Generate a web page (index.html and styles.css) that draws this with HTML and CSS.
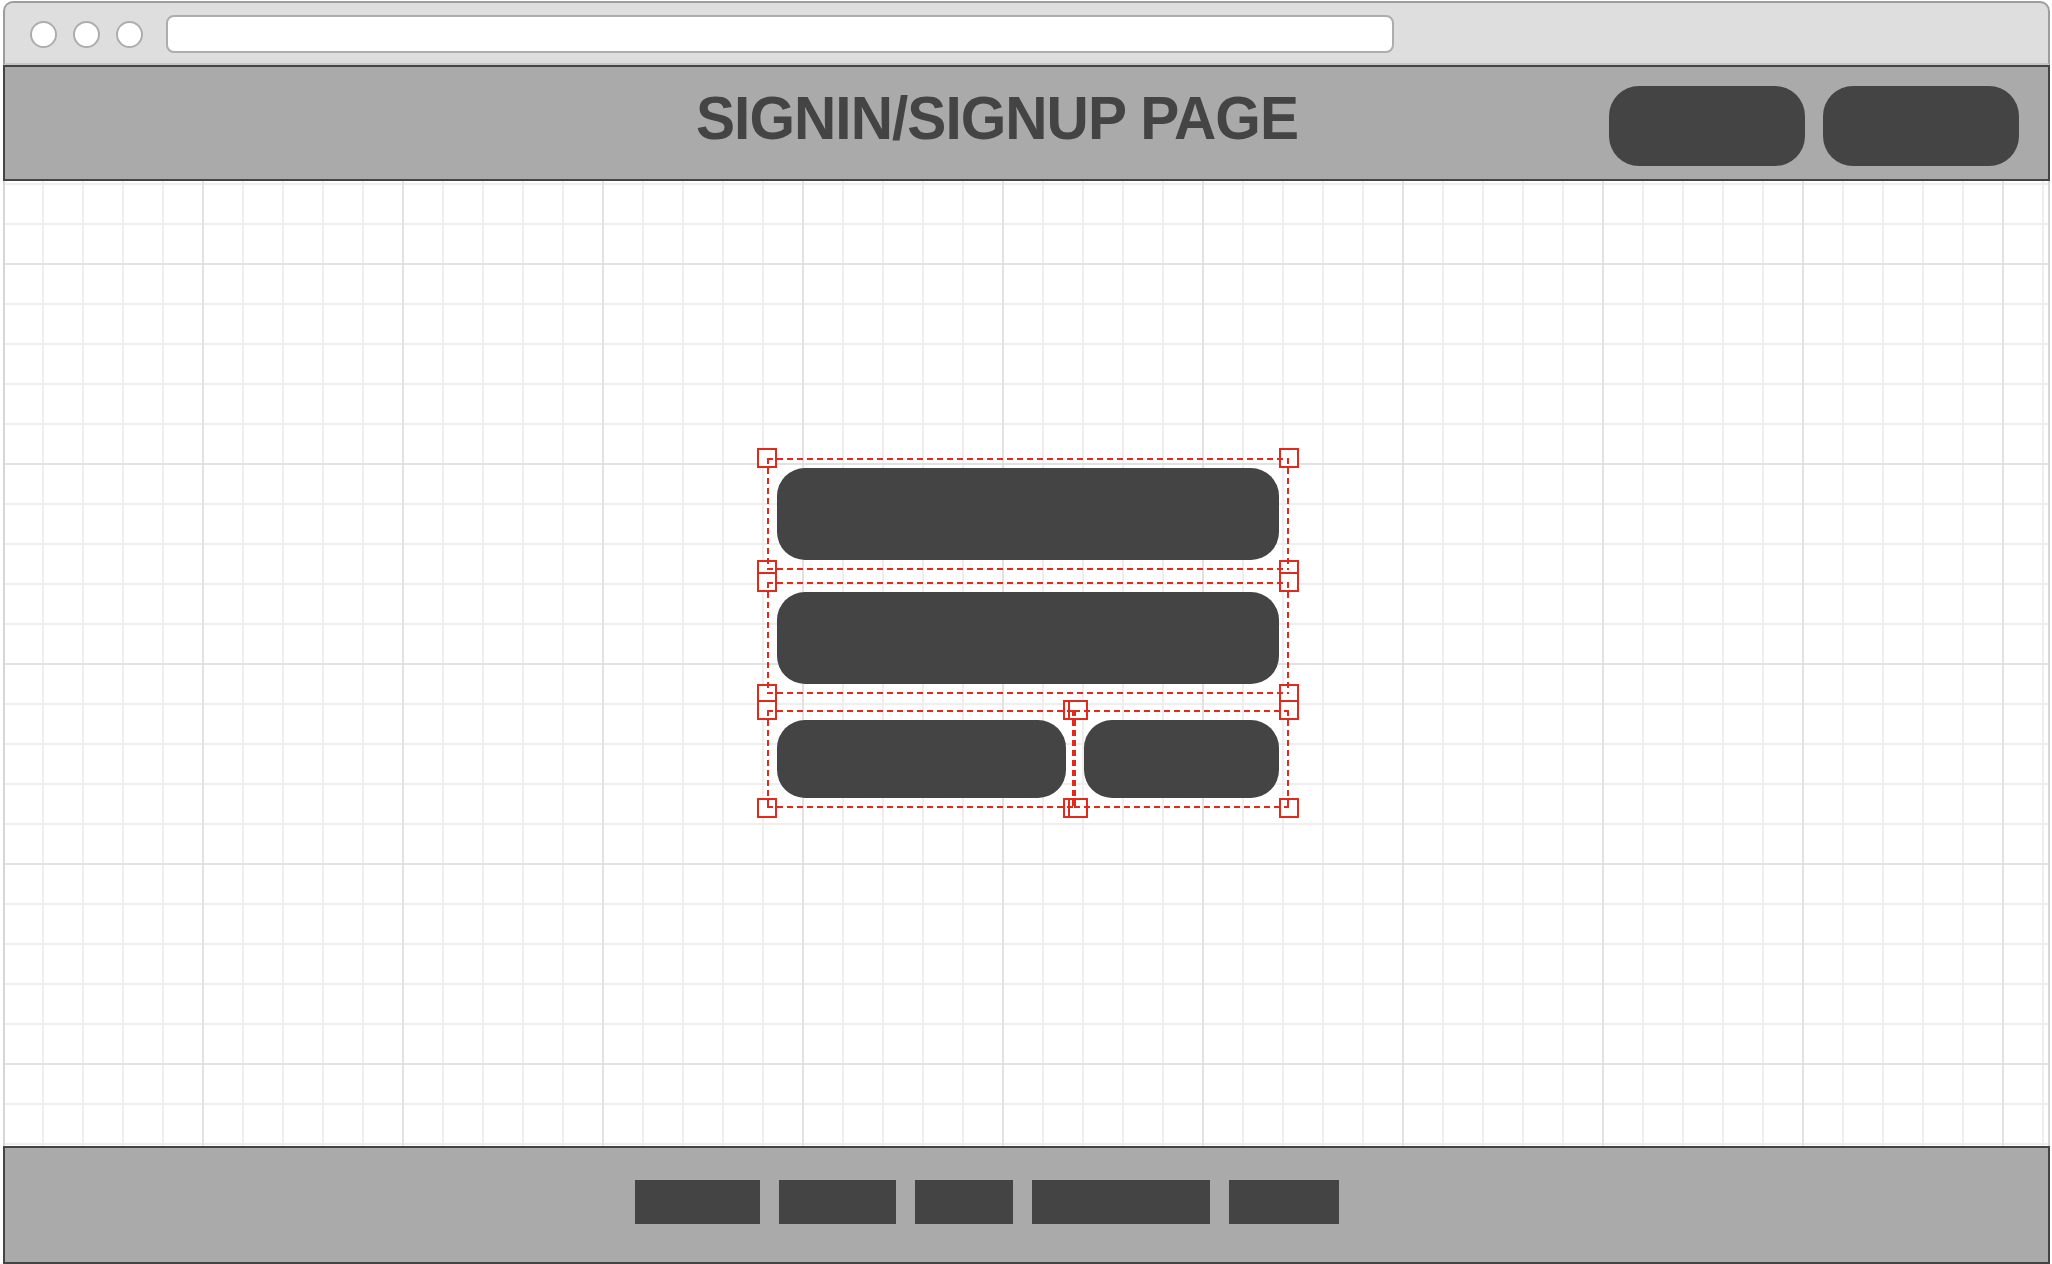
FILE: index.html
```html
<!DOCTYPE html>
<html lang="en">
<head>
<meta charset="utf-8">
<title>Signin/Signup Page Wireframe</title>
<link rel="stylesheet" href="styles.css">
</head>
<body>
<div class="window">
  <div class="chrome">
    <span class="dot"></span>
    <span class="dot"></span>
    <span class="dot"></span>
    <div class="address"></div>
  </div>
  <header class="header">
    <h1 class="title">SIGNIN/SIGNUP PAGE</h1>
    <div class="header-actions">
      <span class="pill"></span>
      <span class="pill"></span>
    </div>
  </header>
  <main class="canvas">
    <div class="form">
      <div class="sel sel-full">
        <span class="h tl"></span><span class="h tr"></span><span class="h bl"></span><span class="h br"></span>
        <div class="field"></div>
      </div>
      <div class="sel sel-full sel-second">
        <span class="h tl"></span><span class="h tr"></span><span class="h bl"></span><span class="h br"></span>
        <div class="field"></div>
      </div>
      <div class="row">
        <div class="sel sel-a">
          <span class="h tl"></span><span class="h tr"></span><span class="h bl"></span><span class="h br"></span>
          <div class="btn"></div>
        </div>
        <div class="sel sel-b">
          <span class="h tl"></span><span class="h tr"></span><span class="h bl"></span><span class="h br"></span>
          <div class="btn"></div>
        </div>
      </div>
    </div>
  </main>
  <footer class="footer">
    <span class="link l1"></span>
    <span class="link l2"></span>
    <span class="link l3"></span>
    <span class="link l4"></span>
    <span class="link l5"></span>
  </footer>
</div>
</body>
</html>
```

FILE: styles.css
```css
* { box-sizing: border-box; }

html, body {
  margin: 0;
  padding: 0;
  background: #ffffff;
  width: 2052px;
  height: 1264px;
  overflow: hidden;
  font-family: "Liberation Sans", Arial, sans-serif;
}

.window {
  margin: 1px 0 0 3px;
  width: 2047px;
  height: 1263px;
  display: flex;
  flex-direction: column;
}

/* browser chrome */
.chrome {
  height: 64px;
  flex: none;
  background: #dedede;
  border: 2px solid #9d9d9d;
  border-bottom: 2px solid #c6c6c6;
  border-radius: 10px 10px 0 0;
  display: flex;
  align-items: center;
  padding: 2px 0 0 25px;
  gap: 16px;
}

.dot {
  width: 27px;
  height: 27px;
  border-radius: 50%;
  background: #ffffff;
  border: 2px solid #adadad;
  flex: none;
}

.address {
  margin-left: 7px;
  width: 1228px;
  height: 38px;
  background: #ffffff;
  border: 2px solid #adadad;
  border-radius: 8px;
}

/* header */
.header {
  height: 116px;
  flex: none;
  background: #aaaaaa;
  border: 2px solid #444444;
  display: flex;
  align-items: flex-start;
  padding: 0 29px 0 691px;
}

.title {
  margin: 21px 0 0 0;
  font-family: "Liberation Sans", Arial, Helvetica, sans-serif;
  font-weight: 700;
  font-size: 61px;
  line-height: 61px;
  letter-spacing: -1px;
  color: #444444;
  white-space: nowrap;
  transform: scaleX(0.96);
  transform-origin: left center;
}

.header-actions {
  margin-left: auto;
  margin-top: 19px;
  display: flex;
  gap: 18px;
}

.pill {
  display: block;
  width: 196px;
  height: 80px;
  border-radius: 30px;
  background: #444444;
}

/* canvas with grid */
.canvas {
  height: 965px;
  flex: none;
  border-left: 2px solid #d6d6d6;
  border-right: 2px solid #d6d6d6;
  background-color: #ffffff;
  background-image:
    linear-gradient(90deg, #e2e2e2 2px, transparent 2px),
    linear-gradient(180deg, #e2e2e2 2px, transparent 2px),
    linear-gradient(90deg, #eeeeee 2px, transparent 2px),
    linear-gradient(180deg, #eeeeee 2px, transparent 2px);
  background-size: 200px 200px, 200px 200px, 40px 40px, 40px 40px;
  background-position: 197px 82px, 197px 82px, 37px 2px, 37px 2px;
  padding: 277px 0 0 762px;
}

.form {
  width: 522px;
  display: flex;
  flex-direction: column;
}

.sel {
  position: relative;
  padding: 10px;
}

.sel::after {
  content: "";
  position: absolute;
  inset: 0;
  z-index: 2;
  pointer-events: none;
  background:
    repeating-linear-gradient(90deg, #e12a1c 0 6px, transparent 6px 10px) left top / 100% 2px no-repeat,
    repeating-linear-gradient(90deg, #e12a1c 0 6px, transparent 6px 10px) left bottom / 100% 2px no-repeat,
    repeating-linear-gradient(180deg, #e12a1c 0 6px, transparent 6px 10px) left top / 2px 100% no-repeat,
    repeating-linear-gradient(180deg, #e12a1c 0 6px, transparent 6px 10px) right top / 2px 100% no-repeat;
}

.h {
  position: absolute;
  width: 20px;
  height: 20px;
  border: 2px solid #e12a1c;
  background: #ffffff;
  z-index: 1;
}
.tl { top: -10px; left: -10px; }
.tr { top: -10px; right: -10px; }
.bl { bottom: -10px; left: -10px; }
.br { bottom: -10px; right: -10px; }

.sel-second { margin-top: 12px; }

.field {
  height: 92px;
  border-radius: 28px;
  background: #444444;
}

.row {
  margin-top: 16px;
  display: flex;
}

.sel-a {
  width: 307px;
  flex: none;
  padding-right: 8px;
}
.sel-a .tr, .sel-a .br { right: -9px; }

.sel-b {
  flex: 1;
  padding-left: 10px;
}
.sel-b .tl, .sel-b .bl { left: -6px; }

.btn {
  height: 78px;
  border-radius: 28px;
  background: #444444;
}

/* footer */
.footer {
  flex: 1;
  background: #aaaaaa;
  border: 2px solid #444444;
  display: flex;
  align-items: flex-start;
  gap: 19px;
  padding: 32px 0 0 630px;
}

.link {
  display: block;
  height: 44px;
  background: #444444;
}
.l1 { width: 125px; }
.l2 { width: 117px; }
.l3 { width: 98px; }
.l4 { width: 178px; }
.l5 { width: 110px; }
```
